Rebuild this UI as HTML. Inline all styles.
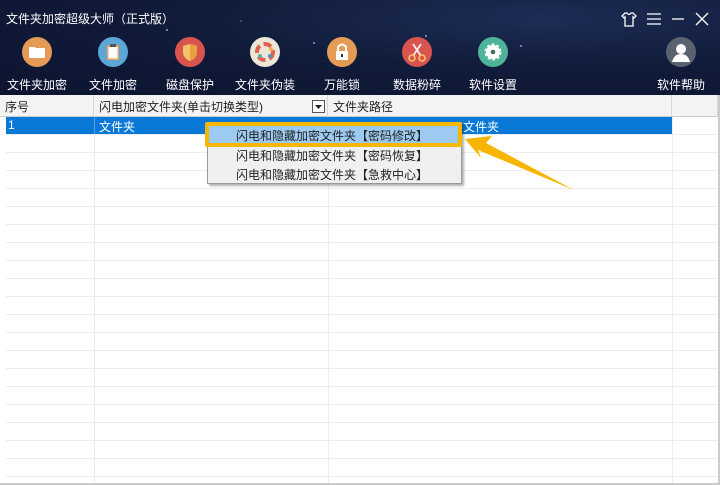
<!DOCTYPE html>
<html><head><meta charset="utf-8">
<style>
*{margin:0;padding:0;box-sizing:border-box}
body{width:720px;height:485px;overflow:hidden;position:relative;background:#fff;font-family:"Liberation Sans","Noto Sans CJK SC",sans-serif;font-size:12px;color:#222}
#hdr{position:absolute;left:0;top:0;width:720px;height:95px;background:radial-gradient(ellipse at 75% 20%,#1c2c55 0%,#111c3a 45%,#0c1430 100%)}
.title{position:absolute;left:6px;top:10px;color:#fff;font-size:12px}
.ico{position:absolute;top:37px;width:30px;height:30px}
.lbl{position:absolute;top:76px;color:#fff;font-size:12px;width:80px;text-align:center}
.star{position:absolute;width:2px;height:2px;background:#8aa0ff;border-radius:1px}
#grid{position:absolute;left:0;top:95px;width:720px;height:390px;background:#fff;border-right:2px solid #ccc;border-bottom:2px solid #ccc}
.th{position:absolute;top:0;height:22px;background:#f3f3f3;border-bottom:1px solid #ccc;border-right:1px solid #d8d8d8;padding:3px 0 0 5px;font-size:12px}
.hl{position:absolute;left:6px;width:712px;height:1px;background:#ececec}
.vl{position:absolute;top:22px;width:1px;height:366px;background:#ececec}
#sel{position:absolute;left:6px;top:22px;width:666px;height:17px;background:#0a78d6;color:#fff}
#menu{position:absolute;left:207px;top:122px;width:255px;height:62px;background:#f0f0f0;border:1px solid #999;box-shadow:2px 2px 2px rgba(0,0,0,.3)}
.mi{position:absolute;left:28px;font-size:12px;color:#222}
</style></head><body>
<div id="hdr">
<div class="star" style="left:166px;top:29px"></div><div class="star" style="left:313px;top:42px"></div><div class="star" style="left:425px;top:35px"></div><div class="star" style="left:520px;top:45px"></div><div class="star" style="left:240px;top:20px;background:#556"></div>
<div class="title">文件夹加密超级大师（正式版）</div>
<svg style="position:absolute;left:620px;top:10px" width="96" height="18" viewBox="0 0 96 18" fill="none" stroke="#fff" stroke-width="1.3">
<path d="M5 3 L2 6 L4 8 L5 7 V16 H13 V7 L14 8 L16 6 L13 3 H11 Q9 6 7 3 Z"/>
<path d="M27 4 H41 M27 9 H41 M27 14 H41"/>
<path d="M52 9 H64"/>
<path d="M76 3 L88 15 M88 3 L76 15"/>
</svg>
<!-- icons -->
<svg class="ico" style="left:22px" viewBox="0 0 30 30"><circle cx="15" cy="15" r="15" fill="#e59a55"/><path d="M7 10 H13 L14 11 H23 V21 H7 Z" fill="#fff"/></svg>
<svg class="ico" style="left:98px" viewBox="0 0 30 30"><circle cx="15" cy="15" r="15" fill="#5aa7d8"/><rect x="9" y="8" width="12" height="15" fill="#f0a060"/><rect x="10.5" y="10" width="9" height="11.5" fill="#fff"/><rect x="12" y="7" width="6" height="3" fill="#555"/></svg>
<svg class="ico" style="left:175px" viewBox="0 0 30 30"><circle cx="15" cy="15" r="15" fill="#d9534f"/><path d="M15 7 L22 9 V15 Q22 21 15 24 Q8 21 8 15 V9 Z" fill="#f3c36a"/><path d="M15 7 L22 9 V15 Q22 21 15 24 Z" fill="#e8a040"/></svg>
<svg class="ico" style="left:250px" viewBox="0 0 30 30"><circle cx="15" cy="15" r="15" fill="#ece6d8"/><g fill="none" stroke-width="4"><circle cx="15" cy="15" r="8" stroke="#e06050" stroke-dasharray="8 4"/></g><circle cx="10" cy="19" r="2" fill="#5ab0a0"/><circle cx="20" cy="19" r="2" fill="#5a90c0"/><circle cx="21" cy="12" r="2" fill="#f0b050"/></svg>
<svg class="ico" style="left:327px" viewBox="0 0 30 30"><circle cx="15" cy="15" r="15" fill="#e59a55"/><path d="M11 14 V10 Q15 5 19 10 V14" fill="none" stroke="#fff" stroke-width="2"/><rect x="9" y="14" width="12" height="9" fill="#fff"/><rect x="14" y="17" width="2" height="3" fill="#333"/></svg>
<svg class="ico" style="left:402px" viewBox="0 0 30 30"><circle cx="15" cy="15" r="15" fill="#d9534f"/><path d="M11 7 L19 19 M19 7 L11 19" stroke="#eee" stroke-width="1.8"/><circle cx="10" cy="21" r="3" fill="none" stroke="#f3c36a" stroke-width="1.6"/><circle cx="20" cy="21" r="3" fill="none" stroke="#f3c36a" stroke-width="1.6"/></svg>
<svg class="ico" style="left:478px" viewBox="0 0 30 30"><circle cx="15" cy="15" r="15" fill="#4fb39a"/><circle cx="15" cy="15" r="7" fill="#fff" stroke="#fff" stroke-width="3" stroke-dasharray="2.5 2"/><circle cx="15" cy="15" r="5.5" fill="#fff"/><circle cx="15" cy="15" r="2.3" fill="#4a6a60"/></svg>
<svg class="ico" style="left:666px" viewBox="0 0 30 30"><circle cx="15" cy="15" r="15" fill="#5a6270"/><circle cx="15" cy="12" r="5" fill="#fff"/><path d="M6 25 Q8 17 15 17 Q22 17 24 25 Z" fill="#fff"/></svg>
<div class="lbl" style="left:-3px">文件夹加密</div>
<div class="lbl" style="left:73px">文件加密</div>
<div class="lbl" style="left:150px">磁盘保护</div>
<div class="lbl" style="left:225px">文件夹伪装</div>
<div class="lbl" style="left:302px">万能锁</div>
<div class="lbl" style="left:377px">数据粉碎</div>
<div class="lbl" style="left:453px">软件设置</div>
<div class="lbl" style="left:641px">软件帮助</div>
</div>
<div id="grid">
<div class="th" style="left:0;width:94px">序号</div>
<div class="th" style="left:94px;width:234px">闪电加密文件夹(单击切换类型)
<svg style="position:absolute;left:218px;top:5px" width="13" height="13"><rect x=".5" y=".5" width="12" height="12" fill="#fff" stroke="#555"/><path d="M3 5 H10 L6.5 9 Z" fill="#222"/></svg></div>
<div class="th" style="left:328px;width:344px">文件夹路径</div>
<div class="th" style="left:672px;width:46px"></div>
<div class="hl" style="top:57px"></div><div class="hl" style="top:75px"></div><div class="hl" style="top:93px"></div><div class="hl" style="top:111px"></div><div class="hl" style="top:129px"></div><div class="hl" style="top:147px"></div><div class="hl" style="top:165px"></div><div class="hl" style="top:183px"></div><div class="hl" style="top:201px"></div><div class="hl" style="top:219px"></div><div class="hl" style="top:237px"></div><div class="hl" style="top:255px"></div><div class="hl" style="top:273px"></div><div class="hl" style="top:291px"></div><div class="hl" style="top:309px"></div><div class="hl" style="top:327px"></div><div class="hl" style="top:345px"></div><div class="hl" style="top:363px"></div><div class="hl" style="top:381px"></div><div class="hl" style="top:39px"></div>
<div class="vl" style="left:94px"></div><div class="vl" style="left:328px"></div><div class="vl" style="left:672px"></div>
<div id="sel"><span style="position:absolute;left:2px;top:1px">1</span><span style="position:absolute;left:93px;top:1px">文件夹</span><span style="position:absolute;left:457px;top:1px">文件夹</span><div style="position:absolute;left:88px;top:0;width:1px;height:17px;background:#5aa0e0"></div></div>
</div>
<div id="menu">
<div style="position:absolute;left:1px;top:2px;width:251px;height:20px;background:#9dcaf0"></div>
<div class="mi" style="top:4px">闪电和隐藏加密文件夹【密码修改】</div>
<div class="mi" style="top:24px">闪电和隐藏加密文件夹【密码恢复】</div>
<div class="mi" style="top:43px">闪电和隐藏加密文件夹【急救中心】</div>
</div>
<div style="position:absolute;left:205px;top:122px;width:257px;height:25px;border:4px solid #f5b700;border-radius:2px"></div>
<svg style="position:absolute;left:0;top:0" width="720" height="485"><polygon points="465,139 492,136 486,143 574,190 478,150 481,158" fill="#f7b500"/></svg>
</body></html>
